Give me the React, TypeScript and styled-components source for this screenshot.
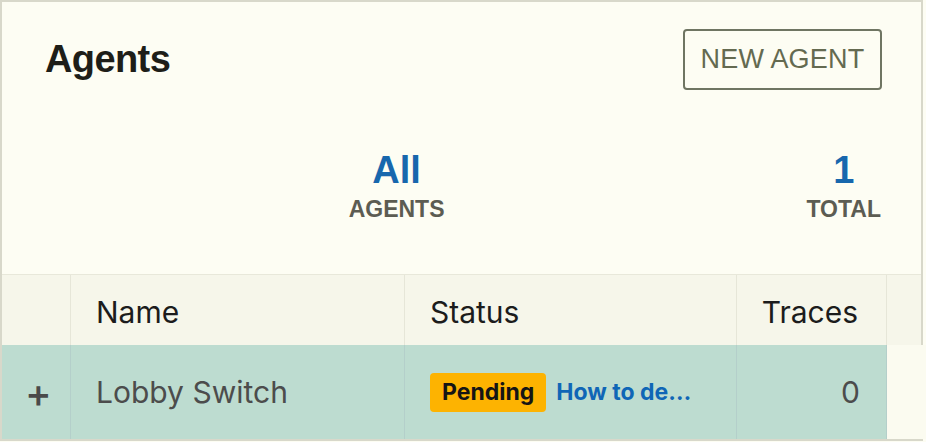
import React from 'react'
import styled, { createGlobalStyle } from 'styled-components'

const GlobalStyle = createGlobalStyle`
    html, body {
        margin: 0;
        padding: 0;
        background: #fdfdf3;
    }
    * {
        box-sizing: border-box;
    }
`

const agents = [{ name: 'Lobby Switch', status: 'Pending', help: 'How to deploy', traces: 0 }]

const App = () => {
    return (
        <>
            <GlobalStyle />
            <Frame>
                <TopBar>
                    <Title>Agents</Title>
                    <NewButton>NEW AGENT</NewButton>
                </TopBar>
                <Stats>
                    <Stat>
                        <StatValue>All</StatValue>
                        <StatLabel>AGENTS</StatLabel>
                    </Stat>
                    <Stat>
                        <StatValue>{agents.length}</StatValue>
                        <StatLabel>TOTAL</StatLabel>
                    </Stat>
                </Stats>
                <Table>
                    <HeadRow>
                        <HeadCell />
                        <HeadCell>Name</HeadCell>
                        <HeadCell>Status</HeadCell>
                        <HeadCell $right>Traces</HeadCell>
                        <HeadCell $last />
                    </HeadRow>
                    {agents.map((agent) => (
                        <Row key={agent.name}>
                            <Cell $selected>
                                <Expand>+</Expand>
                            </Cell>
                            <Cell $selected>{agent.name}</Cell>
                            <Cell $selected>
                                <StatusWrap>
                                    <Badge>{agent.status}</Badge>
                                    <HelpLink>{agent.help}</HelpLink>
                                </StatusWrap>
                            </Cell>
                            <Cell $selected $right>
                                {agent.traces}
                            </Cell>
                            <Cell $last />
                        </Row>
                    ))}
                </Table>
            </Frame>
        </>
    )
}

const Frame = styled.div`
    width: 923px;
    height: 441px;
    border: 2px solid #d8d8ca;
    display: flex;
    flex-direction: column;
    font-family: 'Liberation Sans', Arial, sans-serif;
`

const TopBar = styled.header`
    display: flex;
    justify-content: space-between;
    align-items: center;
    padding: 27px 39px 0 43px;
`

const Title = styled.h1`
    margin: 0;
    font-size: 38px;
    font-weight: 700;
    letter-spacing: -0.6px;
    color: #1e1e18;
`

const NewButton = styled.button`
    width: 199px;
    height: 61px;
    border: 2px solid #6f7562;
    border-radius: 4px;
    background: transparent;
    color: #646a50;
    font-family: 'Liberation Sans', Arial, sans-serif;
    font-size: 27px;
    letter-spacing: 0.2px;
    cursor: pointer;
`

const Stats = styled.section`
    display: flex;
    justify-content: flex-end;
    gap: 362px;
    padding: 58px 40px 0 0;
    height: 184px;
`

const Stat = styled.div`
    display: flex;
    flex-direction: column;
    align-items: center;
`

const StatValue = styled.div`
    font-size: 38px;
    font-weight: 700;
    line-height: 44px;
    color: #1767ad;
`

const StatLabel = styled.div`
    margin-top: 4px;
    font-size: 23px;
    font-weight: 700;
    line-height: 26px;
    color: #5c5c52;
`

const Table = styled.div`
    display: flex;
    flex-direction: column;
    font-family: Inter, 'Noto Sans', sans-serif;
`

const columns = '69px 334px 332px 150px 1fr'

const HeadRow = styled.div`
    display: grid;
    grid-template-columns: ${columns};
    height: 71px;
    background: #f6f6ea;
    border-top: 1px solid #e8e8da;
`

const HeadCell = styled.div<{ $right?: boolean; $last?: boolean }>`
    display: flex;
    align-items: center;
    justify-content: ${({ $right }) => ($right ? 'flex-end' : 'flex-start')};
    padding: 4px 28px 0 25px;
    border-right: ${({ $last }) => ($last ? 'none' : '1px solid #e6e6d8')};
    font-size: 30px;
    color: #1c1c1c;
`

const Row = styled.div`
    display: grid;
    grid-template-columns: ${columns};
    height: 94px;
`

const Cell = styled.div<{ $selected?: boolean; $right?: boolean; $last?: boolean }>`
    display: flex;
    align-items: center;
    justify-content: ${({ $right }) => ($right ? 'flex-end' : 'flex-start')};
    padding: 0 26px 0 25px;
    background: ${({ $selected }) => ($selected ? '#bddcd0' : '#fbfbf0')};
    border-right: ${({ $last }) => ($last ? 'none' : '1px solid #b4cfca')};
    font-size: 30px;
    color: #4c4c4c;
    min-width: 0;
`

const Expand = styled.span`
    margin-left: -2px;
    font-size: 40px;
    font-weight: 500;
    color: #4a4a4a;
`

const StatusWrap = styled.div`
    display: flex;
    align-items: center;
    gap: 10px;
    min-width: 0;
    overflow: hidden;
`

const Badge = styled.span`
    flex: none;
    padding: 5px 12px 6px;
    border-radius: 4px;
    background: #fdb301;
    color: #151515;
    font-size: 23px;
    font-weight: 700;
`

const HelpLink = styled.span`
    min-width: 0;
    max-width: 140px;
    overflow: hidden;
    white-space: nowrap;
    text-overflow: ellipsis;
    color: #6a6a6a;
    font-size: 23px;
    font-weight: 700;

    &::first-line {
        color: #0f66b6;
    }
`

export default App
